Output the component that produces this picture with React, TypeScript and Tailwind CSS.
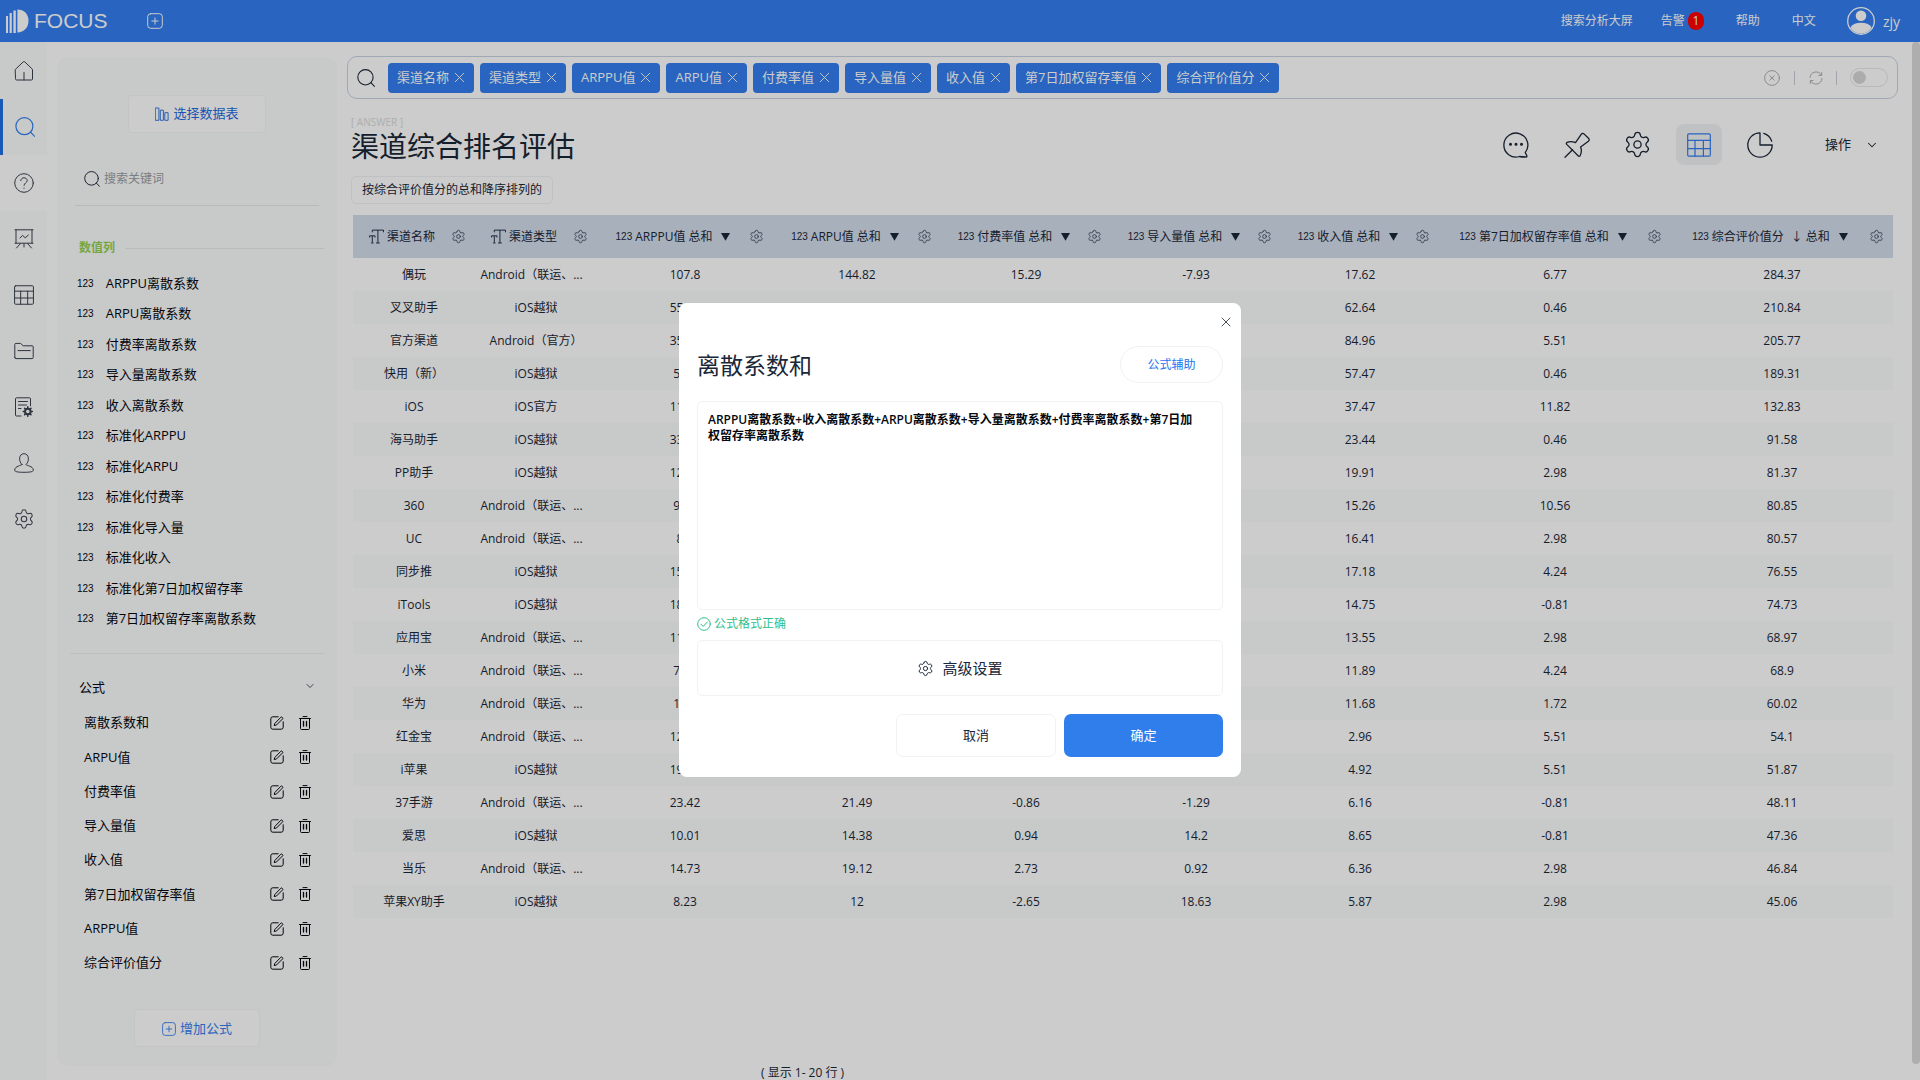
import React from 'react';
import { Settings, X, ChevronDown } from 'lucide-react';

type IconProps = { className?: string };

const stroke = {
  fill: 'none',
  stroke: 'currentColor',
  strokeLinecap: 'round' as const,
  strokeLinejoin: 'round' as const,
};

function LogoMark() {
  return (
    <svg viewBox="0 0 23 24" className="h-6 w-[23px]" fill="currentColor" aria-hidden="true">
      <rect x="0" y="7" width="2" height="17" />
      <rect x="3.6" y="4" width="2.2" height="20" />
      <rect x="7.4" y="1.5" width="2.4" height="22.5" />
      <path d="M11.4 0.5C18 0.5 22.5 5 22.5 11.8S18 23.4 11.4 23.4Z" />
    </svg>
  );
}

function PlusBox({ className }: IconProps) {
  return (
    <svg viewBox="0 0 16 16" className={className} {...stroke} aria-hidden="true">
      <rect x="0.7" y="0.7" width="14.6" height="14.6" rx="3" />
      <path d="M8 4.8v6.4M4.8 8h6.4" />
    </svg>
  );
}

function SearchIcon({ className }: IconProps) {
  return (
    <svg viewBox="0 0 20 20" className={className} {...stroke} strokeWidth="1.2" aria-hidden="true">
      <circle cx="9.4" cy="9.2" r="8.5" />
      <path d="M15.5 15.2l3.9 4" />
    </svg>
  );
}

function HomeIcon() {
  return (
    <svg viewBox="0 0 20 20" className="size-5" {...stroke} aria-hidden="true">
      <path d="M1.5 8.3 9.2.9q.8-.7 1.6 0l7.7 7.4V18q0 1-1 1h-15q-1 0-1-1zM10 11.5V19" />
    </svg>
  );
}

function HelpIcon() {
  return (
    <svg viewBox="0 0 20 20" className="size-5" {...stroke} aria-hidden="true">
      <circle cx="10" cy="10" r="9.3" />
      <path d="M6.8 7.6C7 5.7 8.3 4.8 10 4.8s3.2 1 3.2 2.8c0 2.2-3.2 2.4-3.2 4.8M10 15v.3" />
    </svg>
  );
}

function BoardIcon() {
  return (
    <svg viewBox="0 0 20 20" className="size-5" {...stroke} aria-hidden="true">
      <path d="M1 .8h18M2 .8v13.4M18 .8v13.4M1 14.2h18M6.5 14.5l-4 4.5M13.5 14.5l4 4.5M10 14.5V18M6 9l2.6-2.6 2.6 2.4L14.4 6" />
    </svg>
  );
}

function TableIcon({ className }: IconProps) {
  return (
    <svg viewBox="0 0 24 24" className={className} {...stroke} strokeWidth="1.2" aria-hidden="true">
      <rect x="0.7" y="0.9" width="22.6" height="22.2" rx="1.2" />
      <path d="M.7 7.4h22.6M.7 15.6h22.6M8 7.4v15.7M16.4 7.4v15.7" />
    </svg>
  );
}

function FolderIcon() {
  return (
    <svg viewBox="0 0 20 20" className="size-5" {...stroke} aria-hidden="true">
      <path d="M.8 16.6V3.4q0-1 1-1h4.8l2.6 2.4h9q1 0 1 1v10.8q0 1-1 1H1.800q-1 0-1-1zM4 9.600h12.300" />
    </svg>
  );
}

function FormIcon() {
  return (
    <svg viewBox="0 0 20 20" className="size-5" {...stroke} aria-hidden="true">
      <path d="M7 19H2.500q-1 0-1-1V1.800q0-1 1-1h13q1 0 1 1v7M4.500 4.500h9M4.500 8h8M4.500 11.500h2.500" />
      <circle cx="13.800" cy="14.500" r="2.800" strokeWidth="2" />
      <path
        d="M13.800 9.800v1M13.800 18.200v1M9.300 14.500h1M17.300 14.500h1M10.600 11.300l.7.700M16.300 17l.7.700M10.600 17.700l.7-.7M16.300 12l.7-.7"
        strokeWidth="1.600"
      />
    </svg>
  );
}

function PersonIcon() {
  return (
    <svg viewBox="0 0 20 20" className="size-5" {...stroke} aria-hidden="true">
      <path d="M8 11.400C6.400 10 5.600 8 5.600 5.700 5.600 2.600 7.500.7 10 .7s4.400 1.900 4.400 5c0 2.300-.8 4.300-2.400 5.700 0 1.300 7.300 1.500 7.300 5.600 0 1.600-2.300 2.300-9.300 2.300S.7 18.600.7 17C.7 12.900 8 12.700 8 11.400z" />
    </svg>
  );
}

function BarsIcon() {
  return (
    <svg viewBox="0 0 14 14" className="size-3.5" {...stroke} strokeWidth="0.9" strokeLinejoin="miter" aria-hidden="true">
      <path d="M.7 1h3.200v12.300H.7zM5.700 3.200h2.700v10.100H5.700zM10.200 5.700h2.900v7.600h-2.900z" />
    </svg>
  );
}

function EditIcon() {
  return (
    <svg viewBox="0 0 14 14" className="size-3.5" {...stroke} aria-hidden="true">
      <path d="M8.200.8H2.800q-2 0-2 2v8.400q0 2 2 2h8.400q2 0 2-2V5.800" />
      <path d="M5 7.300 10.900 1.200q.6-.5 1.200 0l.5.500q.5.600 0 1.200L6.600 8.900 4.600 9.500z" />
    </svg>
  );
}

function TrashIcon() {
  return (
    <svg viewBox="0 0 14 14" className="size-3.5" {...stroke} aria-hidden="true">
      <path d="M1.500 2.500h11M5 .6h4M2.500 2.500v10q0 1 1 1h7q1 0 1-1v-10" />
      <path d="M5.500 5.500v4.600M8.500 5.500v4.600" strokeWidth="1.300" />
    </svg>
  );
}

function ClearIcon() {
  return (
    <svg viewBox="0 0 16 16" className="size-4" {...stroke} aria-hidden="true">
      <circle cx="8" cy="8" r="7.400" />
      <path d="M5.800 5.800l4.400 4.400M10.200 5.800l-4.400 4.400" />
    </svg>
  );
}

function RefreshIcon() {
  return (
    <svg viewBox="0 0 14 14" className="size-3.5" {...stroke} aria-hidden="true">
      <path d="M1 6.500A6 6 0 0 1 12.300 4.200M13 7.500A6 6 0 0 1 1.700 9.800M12.700 1.500v2.900H10M1.300 12.500V9.600H4" />
    </svg>
  );
}

function ChatIcon() {
  return (
    <svg viewBox="0 0 26 26" className="size-[26px]" {...stroke} strokeWidth="1.300" aria-hidden="true">
      <path d="M22.200 20.600A12 12 0 1 0 16.500 24.500q2 .500 6.700.500.900 0 .700-1c-.400-1.500-1.200-2.200-1.700-3.400z" />
      <path d="M7.500 12.200h.01M13 12.200h.01M18.500 12.200h.01" strokeWidth="3" />
    </svg>
  );
}

function PinIcon() {
  return (
    <svg viewBox="0 0 26 26" className="size-[26px]" {...stroke} strokeWidth="1.300" aria-hidden="true">
      <path d="M1 25.300 8.500 17.800" />
      <path d="M2.700 12.400q-1-1.200.500-2c2.600-1.200 5.700-.900 8.300.3l5.700-8.400q1.300-1.700 3-.2l4.300 4.200q1.500 1.500-.1 2.900l-7.800 5.700c1.200 2.700 1 5.600-.4 8.600-.6 1.200-1.400.9-2.100.2z" />
    </svg>
  );
}

function PieIcon() {
  return (
    <svg viewBox="0 0 26 26" className="size-[26px]" {...stroke} strokeWidth="1.300" aria-hidden="true">
      <path d="M13 .8A12.200 12.200 0 1 0 25.200 13H13zM16.800 1.300A12.200 12.200 0 0 1 24.700 9.200" />
    </svg>
  );
}

function TextTypeIcon() {
  return (
    <svg viewBox="0 0 16 16" className="size-[15px]" {...stroke} strokeLinecap="butt" aria-hidden="true">
      <path d="M3.500 3.500V1.200h12v2.300M9.500 1.200v13.600M7.500 14.900h4" />
      <path d="M.6 9V7.300h5.800V9M3.500 7.300v7.300M2.300 14.900h2.500" />
    </svg>
  );
}

function CheckCircle() {
  return (
    <svg viewBox="0 0 14 14" className="size-3.5" {...stroke} aria-hidden="true">
      <circle cx="7" cy="7" r="6.300" />
      <path d="M4 7.200l2.200 2.200L10.300 5" />
    </svg>
  );
}

function Avatar() {
  return (
    <svg viewBox="0 0 28 28" className="size-7" aria-hidden="true">
      <circle cx="14" cy="14" r="13.300" fill="none" stroke="currentColor" strokeWidth="1.300" />
      <circle cx="14" cy="8.800" r="5.300" fill="currentColor" />
      <path d="M3.400 20.500C5.500 17.200 9.500 15.800 14 15.800s8.500 1.400 10.600 4.700A12.500 12.500 0 0 1 14 26.700 12.500 12.500 0 0 1 3.400 20.500z" fill="currentColor" />
    </svg>
  );
}

const navItems = [
  { label: '首页', icon: <HomeIcon /> },
  { label: '搜索', icon: <SearchIcon className="size-5" />, active: true },
  { label: '问答', icon: <HelpIcon />, light: true },
  { label: '看板', icon: <BoardIcon /> },
  { label: '数据表', icon: <TableIcon className="size-5" /> },
  { label: '资源', icon: <FolderIcon /> },
  { label: '任务', icon: <FormIcon /> },
  { label: '用户', icon: <PersonIcon /> },
  { label: '设置', icon: <Settings size={22} strokeWidth={1.1} /> },
];

const numericColumns = [
  'ARPPU离散系数',
  'ARPU离散系数',
  '付费率离散系数',
  '导入量离散系数',
  '收入离散系数',
  '标准化ARPPU',
  '标准化ARPU',
  '标准化付费率',
  '标准化导入量',
  '标准化收入',
  '标准化第7日加权留存率',
  '第7日加权留存率离散系数',
];

const formulas = ['离散系数和', 'ARPU值', '付费率值', '导入量值', '收入值', '第7日加权留存率值', 'ARPPU值', '综合评价值分'];

const chips = ['渠道名称', '渠道类型', 'ARPPU值', 'ARPU值', '付费率值', '导入量值', '收入值', '第7日加权留存率值', '综合评价值分'];

const columns = [
  { name: '渠道名称', text: true, col: 'w-[122px]' },
  { name: '渠道类型', text: true, col: 'w-[122px]' },
  { name: 'ARPPU值', col: 'w-[176px]' },
  { name: 'ARPU值', col: 'w-[168px]' },
  { name: '付费率值', col: 'w-[170px]' },
  { name: '导入量值', col: 'w-[170px]' },
  { name: '收入值', col: 'w-[158px]' },
  { name: '第7日加权留存率值', col: 'w-[232px]' },
  { name: '综合评价值分', sorted: true, col: 'w-[222px]' },
];

const ANDROID = 'Android（联运、...';

const rows = [
  ['偶玩', ANDROID, '107.8', '144.82', '15.29', '-7.93', '17.62', '6.77', '284.37'],
  ['叉叉助手', 'iOS越狱', '55.27', '', '', '', '62.64', '0.46', '210.84'],
  ['官方渠道', 'Android（官方）', '35.61', '', '', '', '84.96', '5.51', '205.77'],
  ['快用（新）', 'iOS越狱', '5.32', '', '', '', '57.47', '0.46', '189.31'],
  ['iOS', 'iOS官方', '11.26', '', '', '', '37.47', '11.82', '132.83'],
  ['海马助手', 'iOS越狱', '33.15', '', '', '', '23.44', '0.46', '91.58'],
  ['PP助手', 'iOS越狱', '12.83', '', '', '', '19.91', '2.98', '81.37'],
  ['360', ANDROID, '9.46', '', '', '', '15.26', '10.56', '80.85'],
  ['UC', ANDROID, '8.4', '', '', '', '16.41', '2.98', '80.57'],
  ['同步推', 'iOS越狱', '15.72', '', '', '', '17.18', '4.24', '76.55'],
  ['iTools', 'iOS越狱', '18.35', '', '', '', '14.75', '-0.81', '74.73'],
  ['应用宝', ANDROID, '11.48', '', '', '', '13.55', '2.98', '68.97'],
  ['小米', ANDROID, '7.25', '', '', '', '11.89', '4.24', '68.9'],
  ['华为', ANDROID, '1.94', '', '', '', '11.68', '1.72', '60.02'],
  ['红金宝', ANDROID, '12.39', '', '', '', '2.96', '5.51', '54.1'],
  ['i苹果', 'iOS越狱', '19.07', '', '', '', '4.92', '5.51', '51.87'],
  ['37手游', ANDROID, '23.42', '21.49', '-0.86', '-1.29', '6.16', '-0.81', '48.11'],
  ['爱思', 'iOS越狱', '10.01', '14.38', '0.94', '14.2', '8.65', '-0.81', '47.36'],
  ['当乐', ANDROID, '14.73', '19.12', '2.73', '0.92', '6.36', '2.98', '46.84'],
  ['苹果XY助手', 'iOS越狱', '8.23', '12', '-2.65', '18.63', '5.87', '2.98', '45.06'],
];

function TopBar() {
  return (
    <header className="flex h-[42px] shrink-0 items-center bg-[#327ef0] pr-5 pl-[6px] text-white">
      <a href="#home" className="flex items-center gap-[5px]">
        <LogoMark />
        <span className="font-['Liberation_Sans',sans-serif] text-[21px] leading-6">FOCUS</span>
      </a>
      <button type="button" aria-label="新建" className="ml-[39px]">
        <PlusBox className="size-4" />
      </button>
      <nav className="ml-auto flex items-center text-[12px]">
        <a href="#screen">搜索分析大屏</a>
        <a href="#alerts" className="ml-7 flex items-center gap-[3px]">
          告警
          <span className="flex h-[18px] w-4 items-center justify-center rounded-full bg-[#ff0000]">1</span>
        </a>
        <a href="#help" className="ml-8">帮助</a>
        <a href="#language" className="ml-8">中文</a>
        <a href="#account" className="ml-[31px] flex items-center gap-2 text-[14px]">
          <Avatar />
          zjy
        </a>
      </nav>
    </header>
  );
}

function NavRail() {
  return (
    <nav aria-label="主导航" className="flex w-[47px] shrink-0 flex-col bg-[#fafcfc] pt-px text-[#3a4250]">
      {navItems.map((item) => (
        <a
          key={item.label}
          href={`#${item.label}`}
          aria-label={item.label}
          className={
            item.active
              ? 'flex h-14 items-center justify-center border-l-[3px] border-[#1f6fe5] text-[#327ef0]'
              : item.light
                ? 'flex h-14 items-center justify-center bg-white'
                : 'flex h-14 items-center justify-center'
          }
        >
          {item.icon}
        </a>
      ))}
    </nav>
  );
}

function SidePanel() {
  return (
    <aside className="mt-[15px] mb-[14px] ml-[10px] flex w-[280px] shrink-0 flex-col rounded-[10px] bg-[#fafcfc] px-[13px] text-[#05080f]">
      <button
        type="button"
        className="mx-auto mt-[38px] flex h-[38px] w-[138px] shrink-0 items-center justify-center gap-1 rounded-[4px] border border-[#f4f5f5] bg-white text-[13px] text-[#1f6ae0]"
      >
        <BarsIcon />
        选择数据表
      </button>
      <label className="mx-[5px] mt-[19px] flex h-[54px] shrink-0 items-center gap-1 border-b border-[#e6e8e8] pl-[9px]">
        <SearchIcon className="size-4 text-[#1b2636]" />
        <input
          type="search"
          aria-label="搜索关键词"
          placeholder="搜索关键词"
          className="min-w-0 flex-1 bg-transparent text-[12px] outline-none placeholder:text-[#9a9ca0]"
        />
      </label>
      <div className="mt-[33px] flex h-[18px] shrink-0 items-center gap-[10px] pl-[9px] text-[12px] font-bold text-[#94d14f]">
        数值列
        <span className="h-px flex-1 bg-[#e9ebeb]" />
      </div>
      <ul className="mt-[11px] grid h-[366px] shrink-0 grid-rows-12 pl-[7px] text-[13px]">
        {numericColumns.map((name) => (
          <li key={name} className="flex items-center gap-3">
            <span className="font-['Liberation_Sans',sans-serif] text-[10px]">123</span>
            {name}
          </li>
        ))}
      </ul>
      <h2 className="mt-[19px] flex h-[53px] shrink-0 items-start justify-between border-t border-[#edefef] pt-[11px] pr-[8px] pl-[9px] text-[13px]">
        <span className="leading-[44px]">公式</span>
        <button type="button" aria-label="收起公式" className="flex h-[42px] items-center">
          <ChevronDown size={12} strokeWidth={1.8} className="text-[#3a4250]" />
        </button>
      </h2>
      <ul className="grid h-[274px] shrink-0 grid-rows-8 pr-[12px] pl-[14px] text-[13px]">
        {formulas.map((name) => (
          <li key={name} className="flex items-center gap-[14px]">
            <span className="flex-1">{name}</span>
            <button type="button" aria-label={`编辑 ${name}`}>
              <EditIcon />
            </button>
            <button type="button" aria-label={`删除 ${name}`}>
              <TrashIcon />
            </button>
          </li>
        ))}
      </ul>
      <button
        type="button"
        className="mx-auto mt-auto mb-[19px] flex h-[38px] w-[126px] shrink-0 items-center justify-center gap-1 rounded-[4px] border border-[#f4f5f5] bg-white pt-px text-[13px] text-[#327ef0]"
      >
        <PlusBox className="size-3.5" />
        增加公式
      </button>
    </aside>
  );
}

function SearchBar() {
  return (
    <div className="mt-[14px] flex h-[43px] items-center rounded-[10px] border border-[#c8d3e4] pr-[9px] pl-[9px]">
      <SearchIcon className="size-[18px] shrink-0 text-[#1b2636]" />
      <div className="ml-[13px] flex gap-[6px] text-[13px] text-white">
        {chips.map((name) => (
          <span key={name} className="flex h-[30px] items-center gap-[2px] rounded-[4px] bg-[#327ef0] pr-[6px] pl-[9px] whitespace-nowrap">
            {name}
            <button type="button" aria-label={`移除 ${name}`}>
              <X size={17} strokeWidth={1.3} />
            </button>
          </span>
        ))}
      </div>
      <input type="text" aria-label="搜索" className="h-8 min-w-0 flex-1 bg-transparent px-2 outline-none" />
      <div className="flex items-center text-[#aeb0b4]">
        <button type="button" aria-label="清空">
          <ClearIcon />
        </button>
        <span className="mx-[14px] h-[14px] w-px bg-[#c9ccd2]" />
        <button type="button" aria-label="刷新">
          <RefreshIcon />
        </button>
        <span className="mx-[13px] h-[14px] w-px bg-[#c9ccd2]" />
        <input
          type="checkbox"
          role="switch"
          aria-label="自动搜索"
          className="flex h-[19px] w-[38px] appearance-none items-center rounded-full border border-[#e6e8ea] before:ml-[2px] before:size-[13px] before:rounded-full before:bg-[#d8d8d8] before:content-['']"
        />
      </div>
    </div>
  );
}

const tools = [
  { label: '评论', icon: <ChatIcon /> },
  { label: '固定', icon: <PinIcon /> },
  { label: '配置', icon: <Settings size={29} strokeWidth={1.1} /> },
  { label: '表格', icon: <TableIcon className="size-6" />, active: true },
  { label: '图表', icon: <PieIcon /> },
];

function TitleRow() {
  return (
    <div className="mt-[15px] flex items-start justify-between pr-[19px] pl-[4px]">
      <div>
        <p className="text-[10px] leading-4 text-[#dadada]">[ ANSWER ]</p>
        <h1 className="text-[28px] leading-8">渠道综合排名评估</h1>
      </div>
      <div className="mt-[10px] flex items-center">
        <div className="flex gap-[15px]">
          {tools.map((tool) => (
            <button
              key={tool.label}
              type="button"
              aria-label={tool.label}
              className={
                tool.active
                  ? 'flex h-[41px] w-[46px] items-center justify-center rounded-[8px] bg-[#f1f2f3] text-[#327ef0]'
                  : 'flex h-[41px] w-[46px] items-center justify-center'
              }
            >
              {tool.icon}
            </button>
          ))}
        </div>
        <button type="button" className="ml-[42px] flex items-center gap-[14px] text-[13px]">
          操作
          <ChevronDown size={14} strokeWidth={1.8} />
        </button>
      </div>
    </div>
  );
}

function ResultTable() {
  return (
    <table className="w-full table-fixed text-center text-[12px]">
      <colgroup>
        {columns.map((column) => (
          <col key={column.name} className={column.col} />
        ))}
      </colgroup>
      <thead className="bg-[#d2dceb]">
        <tr className="h-[43px]">
          {columns.map((column) => (
            <th key={column.name} scope="col" className="p-0 font-normal">
              <div className="flex items-center pr-[9px]">
                <div className="flex flex-1 items-center justify-center gap-[3px] whitespace-nowrap">
                  {column.text ? (
                    <TextTypeIcon />
                  ) : (
                    <span className="font-['Liberation_Sans',sans-serif] text-[10px]">123</span>
                  )}
                  <span>{column.name}</span>
                  {column.sorted && <span className="ml-1">↓</span>}
                  {!column.text && (
                    <>
                      <span>总和</span>
                      <svg viewBox="0 0 9 8" className="ml-[6px] h-2 w-[9px]" fill="currentColor" aria-hidden="true">
                        <path d="M0 0h9L4.500 7.800z" />
                      </svg>
                    </>
                  )}
                </div>
                <button type="button" aria-label={`${column.name} 设置`}>
                  <Settings size={15} strokeWidth={1.4} className="text-[#3f4b5c]" />
                </button>
              </div>
            </th>
          ))}
        </tr>
      </thead>
      <tbody>
        {rows.map((row) => (
          <tr key={row[0]} className="h-[33px] even:bg-[#fafcfc]">
            {row.map((value, i) => (
              <td
                key={columns[i].name}
                className={value === ANDROID ? 'overflow-hidden p-0 pr-[9px] whitespace-nowrap' : 'overflow-hidden p-0 whitespace-nowrap'}
              >
                {value}
              </td>
            ))}
          </tr>
        ))}
      </tbody>
    </table>
  );
}

function FormulaDialog() {
  return (
    <div className="fixed inset-0 flex items-center justify-center bg-black/20">
      <div
        role="dialog"
        aria-modal="true"
        aria-labelledby="formula-title"
        className="relative flex w-[562px] flex-col rounded-[8px] bg-white px-[18px] pt-[43px] pb-5"
      >
        <button type="button" aria-label="关闭" className="absolute top-[11px] right-[7px]">
          <X size={16} strokeWidth={1.4} className="text-[#3a4250]" />
        </button>
        <div className="flex items-center justify-between">
          <h2 id="formula-title" className="text-[23px] leading-8">离散系数和</h2>
          <button type="button" className="h-[37px] w-[103px] rounded-full border border-[#f1f2f3] text-[12px] text-[#1f74f0]">
            公式辅助
          </button>
        </div>
        <textarea
          aria-label="公式内容"
          className="mt-[18px] h-[209px] resize-none rounded-[5px] border border-[#f1f2f3] py-[10px] pr-[18px] pl-[10px] text-[12px] leading-4 font-semibold text-[#05080f] outline-none"
          defaultValue="ARPPU离散系数+收入离散系数+ARPU离散系数+导入量离散系数+付费率离散系数+第7日加权留存率离散系数"
        />
        <p className="mt-[6px] flex h-4 items-center gap-[3px] text-[12px] text-[#2fc08d]">
          <CheckCircle />
          公式格式正确
        </p>
        <button
          type="button"
          className="mt-[8px] flex h-[56px] items-center justify-center gap-[8px] rounded-[5px] border border-[#f1f2f3] text-[15px]"
        >
          <Settings size={17} strokeWidth={1.4} />
          高级设置
        </button>
        <div className="mt-[18px] flex justify-end gap-[8px] text-[13px]">
          <button type="button" className="h-[43px] w-40 rounded-[7px] border border-[#f1f2f3]">
            取消
          </button>
          <button type="button" className="h-[43px] w-[159px] rounded-[7px] bg-[#307eec] text-white">
            确定
          </button>
        </div>
      </div>
    </div>
  );
}

export default function App() {
  return (
    <div className="flex h-screen flex-col overflow-hidden bg-white font-['Open_Sans','Noto_Sans_CJK_SC',sans-serif] text-[#1a2738]">
      <TopBar />
      <div className="flex min-h-0 flex-1">
        <NavRail />
        <SidePanel />
        <main className="ml-[10px] flex min-w-0 flex-1 flex-col">
          <SearchBar />
          <TitleRow />
          <p className="mt-[11px] ml-[4px] flex h-7 items-center self-start rounded-[5px] border border-[#f1f2f3] px-[10px] text-[12px]">
            按综合评价值分的总和降序排列的
          </p>
          <div className="mt-[11px] mr-[5px] ml-[6px]">
            <ResultTable />
          </div>
          <p className="mt-auto ml-[414px] text-[12px] leading-[14px]">( 显示 1- 20 行 )</p>
        </main>
        <div className="mb-4 ml-[14px] w-2 shrink-0 rounded-full bg-[#dadada]" />
      </div>
      <FormulaDialog />
    </div>
  );
}
